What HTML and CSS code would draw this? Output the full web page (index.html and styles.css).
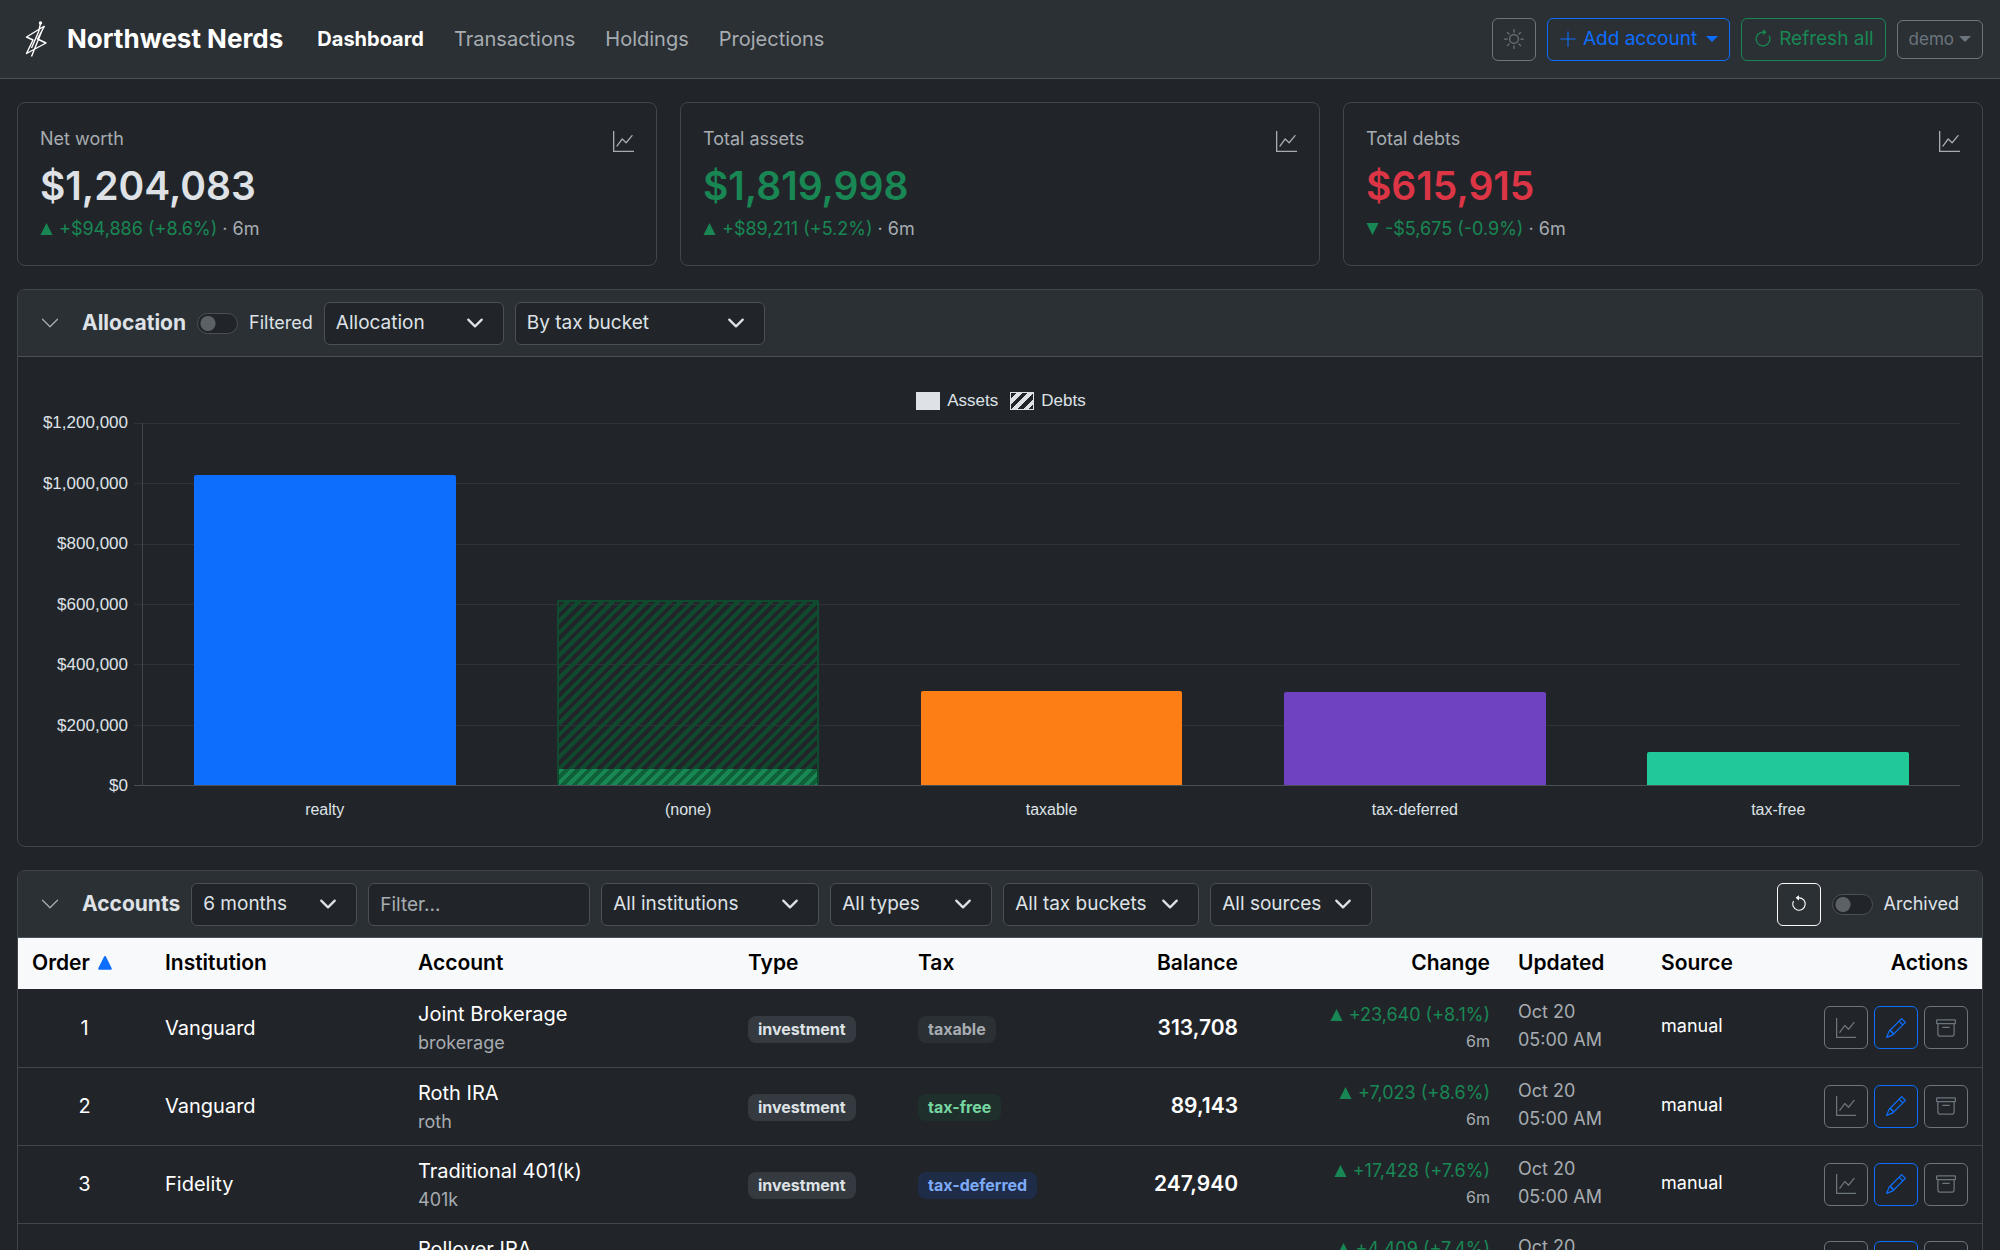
FILE: index.html
```html
<!DOCTYPE html>
<html lang="en">
<head>
<meta charset="utf-8">
<meta name="viewport" content="width=device-width, initial-scale=1">
<title>Northwest Nerds</title>
<link rel="stylesheet" href="styles.css">
</head>
<body>
<svg class="sprite" aria-hidden="true">
  <symbol id="graph-up" viewBox="0 0 16 16"><path fill-rule="evenodd" d="M0 0h1v15h15v1H0zm14.817 3.113a.5.5 0 0 1 .07.704l-4.5 5.5a.5.5 0 0 1-.74.037L7.06 6.767l-3.656 5.027a.5.5 0 0 1-.808-.588l4-5.5a.5.5 0 0 1 .758-.06l2.609 2.61 4.15-5.073a.5.5 0 0 1 .704-.07"/></symbol>
  <symbol id="sun" viewBox="0 0 16 16"><path d="M8 11a3 3 0 1 1 0-6 3 3 0 0 1 0 6m0 1a4 4 0 1 0 0-8 4 4 0 0 0 0 8M8 0a.5.5 0 0 1 .5.5v2a.5.5 0 0 1-1 0v-2A.5.5 0 0 1 8 0m0 13a.5.5 0 0 1 .5.5v2a.5.5 0 0 1-1 0v-2A.5.5 0 0 1 8 13m8-5a.5.5 0 0 1-.5.5h-2a.5.5 0 0 1 0-1h2a.5.5 0 0 1 .5.5M3 8a.5.5 0 0 1-.5.5h-2a.5.5 0 0 1 0-1h2A.5.5 0 0 1 3 8m10.657-5.657a.5.5 0 0 1 0 .707l-1.414 1.415a.5.5 0 1 1-.707-.708l1.414-1.414a.5.5 0 0 1 .707 0m-9.193 9.193a.5.5 0 0 1 0 .707L3.05 13.657a.5.5 0 0 1-.707-.707l1.414-1.414a.5.5 0 0 1 .707 0m9.193 2.121a.5.5 0 0 1-.707 0l-1.414-1.414a.5.5 0 0 1 .707-.707l1.414 1.414a.5.5 0 0 1 0 .707M4.464 4.465a.5.5 0 0 1-.707 0L2.343 3.05a.5.5 0 1 1 .707-.707l1.414 1.414a.5.5 0 0 1 0 .708"/></symbol>
  <symbol id="plus" viewBox="0 0 16 16"><path d="M8 1a.5.5 0 0 1 .5.5v6h6a.5.5 0 0 1 0 1h-6v6a.5.5 0 0 1-1 0v-6h-6a.5.5 0 0 1 0-1h6v-6A.5.5 0 0 1 8 1"/></symbol>
  <symbol id="clockwise" viewBox="0 0 16 16"><path fill-rule="evenodd" d="M8 3a5 5 0 1 0 4.546 2.914.5.5 0 0 1 .908-.417A6 6 0 1 1 8 2z"/><path d="M8 4.466V.534a.25.25 0 0 1 .41-.192l2.36 1.966c.12.1.12.284 0 .384L8.41 4.658A.25.25 0 0 1 8 4.466"/></symbol>
  <symbol id="counterclockwise" viewBox="0 0 16 16"><path fill-rule="evenodd" d="M8 3a5 5 0 1 1-4.546 2.914.5.5 0 0 0-.908-.417A6 6 0 1 0 8 2z"/><path d="M8 4.466V.534a.25.25 0 0 0-.41-.192L5.23 2.308a.25.25 0 0 0 0 .384l2.36 1.966A.25.25 0 0 0 8 4.466"/></symbol>
  <symbol id="pencil" viewBox="0 0 16 16"><path d="M12.146.146a.5.5 0 0 1 .708 0l3 3a.5.5 0 0 1 0 .708l-10 10a.5.5 0 0 1-.168.11l-5 2a.5.5 0 0 1-.65-.65l2-5a.5.5 0 0 1 .11-.168zM11.207 2.5 13.5 4.793 14.793 3.5 12.5 1.207zm1.586 3L10.5 3.207 4 9.707V10h.5a.5.5 0 0 1 .5.5v.5h.5a.5.5 0 0 1 .5.5v.5h.293zm-9.761 5.175-.106.106-1.528 3.821 3.821-1.528.106-.106A.5.5 0 0 1 5 12.5V12h-.5a.5.5 0 0 1-.5-.5V11h-.5a.5.5 0 0 1-.468-.325"/></symbol>
  <symbol id="archive" viewBox="0 0 16 16"><path d="M0 2a1 1 0 0 1 1-1h14a1 1 0 0 1 1 1v2a1 1 0 0 1-1 1v7.5a2.5 2.5 0 0 1-2.5 2.5h-9A2.5 2.5 0 0 1 1 12.5V5a1 1 0 0 1-1-1zm2 3v7.5A1.5 1.5 0 0 0 3.5 14h9a1.5 1.5 0 0 0 1.5-1.5V5zm13-3H1v2h14zM5 7.5a.5.5 0 0 1 .5-.5h5a.5.5 0 0 1 0 1h-5a.5.5 0 0 1-.5-.5"/></symbol>
  <symbol id="chevron" viewBox="0 0 16 16"><path fill-rule="evenodd" d="M1.646 4.646a.5.5 0 0 1 .708 0L8 10.293l5.646-5.647a.5.5 0 0 1 .708.708l-6 6a.5.5 0 0 1-.708 0l-6-6a.5.5 0 0 1 0-.708"/></symbol>
  <symbol id="up" viewBox="0 0 12 12"><path d="M6 0l6 12H0z"/></symbol>
  <symbol id="down" viewBox="0 0 12 12"><path d="M0 0h12L6 12z"/></symbol>
  <symbol id="sort-up" viewBox="0 0 14 14"><path d="M6.100.6a1 1 0 0 1 1.800 0l5.800 11.600a1 1 0 0 1-.9 1.500H1.200a1 1 0 0 1-.9-1.500z"/></symbol>
  <symbol id="caret" viewBox="0 0 12 6"><path d="M0 0h12L6 6z"/></symbol>
</svg>

<nav class="navbar">
  <a class="brand" href="#">
    <svg class="logo" viewBox="0 0 22 36" aria-hidden="true"><path d="M15.500 2.500L13.500 11M19.500 5L1.500 16 8 19 1.500 32.500 21 22 12.500 18 19.500 5M17 9.500L6.500 35.500M13.500 11L6.500 27" fill="none" stroke="currentColor" stroke-width="1.400" stroke-linejoin="round"/><circle cx="15.500" cy="2" r="1.700" fill="currentColor"/></svg>
    <span>Northwest Nerds</span>
  </a>
  <div class="nav-links">
    <a class="nav-link active" href="#">Dashboard</a>
    <a class="nav-link" href="#">Transactions</a>
    <a class="nav-link" href="#">Holdings</a>
    <a class="nav-link" href="#">Projections</a>
  </div>
  <div class="nav-actions">
    <button class="btn btn-icon" type="button" aria-label="Toggle theme"><svg class="icon"><use href="#sun"/></svg></button>
    <button class="btn btn-primary" type="button"><svg class="icon icon-sm"><use href="#plus"/></svg>Add account<svg class="caret"><use href="#caret"/></svg></button>
    <button class="btn btn-success" type="button"><svg class="icon"><use href="#clockwise"/></svg>Refresh all</button>
    <button class="btn btn-user" type="button">demo<svg class="caret"><use href="#caret"/></svg></button>
  </div>
</nav>

<main class="page">
  <section class="stats">
    <article class="card stat">
      <div>
        <div class="stat-label">Net worth</div>
        <div class="stat-value">$1,204,083</div>
        <div class="stat-note"><span class="gain"><svg class="tri"><use href="#up"/></svg>+$94,886 (+8.6%)</span> · 6m</div>
      </div>
      <svg class="stat-icon"><use href="#graph-up"/></svg>
    </article>
    <article class="card stat">
      <div>
        <div class="stat-label">Total assets</div>
        <div class="stat-value gain">$1,819,998</div>
        <div class="stat-note"><span class="gain"><svg class="tri"><use href="#up"/></svg>+$89,211 (+5.2%)</span> · 6m</div>
      </div>
      <svg class="stat-icon"><use href="#graph-up"/></svg>
    </article>
    <article class="card stat">
      <div>
        <div class="stat-label">Total debts</div>
        <div class="stat-value loss">$615,915</div>
        <div class="stat-note"><span class="gain"><svg class="tri"><use href="#down"/></svg>-$5,675 (-0.9%)</span> · 6m</div>
      </div>
      <svg class="stat-icon"><use href="#graph-up"/></svg>
    </article>
  </section>

  <section class="card">
    <header class="card-header">
      <button class="collapse" type="button" aria-label="Collapse allocation"><svg class="icon"><use href="#chevron"/></svg></button>
      <h2>Allocation</h2>
      <label class="switch"><input type="checkbox"><span>Filtered</span></label>
      <select class="select w-view" aria-label="View"><option>Allocation</option></select>
      <select class="select w-group" aria-label="Group by"><option>By tax bucket</option></select>
    </header>
    <div class="chart">
      <div class="legend">
        <span class="key"><i class="swatch"></i>Assets</span>
        <span class="key"><i class="swatch hatched"></i>Debts</span>
      </div>
      <div class="plot-row">
        <div class="y-axis">
          <span>$1,200,000</span><span>$1,000,000</span><span>$800,000</span><span>$600,000</span><span>$400,000</span><span>$200,000</span><span>$0</span>
        </div>
        <div class="grid">
          <i></i><i></i><i></i><i></i><i></i><i></i>
        </div>
        <div class="plot">
          <div class="bar blue" style="height: 85.7%"></div>
          <div class="bar debt" style="height: 51.1%"><div class="bar-asset" style="height: 8.5%"></div></div>
          <div class="bar orange" style="height: 26.1%"></div>
          <div class="bar purple" style="height: 25.8%"></div>
          <div class="bar teal" style="height: 9.2%"></div>
        </div>
      </div>
      <div class="x-axis">
        <span>realty</span><span>(none)</span><span>taxable</span><span>tax-deferred</span><span>tax-free</span>
      </div>
    </div>
  </section>

  <section class="card">
    <header class="card-header">
      <button class="collapse" type="button" aria-label="Collapse accounts"><svg class="icon"><use href="#chevron"/></svg></button>
      <h2>Accounts</h2>
      <select class="select w-period" aria-label="Period"><option>6 months</option></select>
      <input class="field" type="text" placeholder="Filter..." aria-label="Filter">
      <select class="select w-inst" aria-label="Institution"><option>All institutions</option></select>
      <select class="select w-type" aria-label="Type"><option>All types</option></select>
      <select class="select w-tax" aria-label="Tax bucket"><option>All tax buckets</option></select>
      <select class="select w-type" aria-label="Source"><option>All sources</option></select>
      <button class="btn btn-icon btn-light" type="button" aria-label="Reset"><svg class="icon icon-sm"><use href="#counterclockwise"/></svg></button>
      <label class="switch"><input type="checkbox"><span>Archived</span></label>
    </header>
    <table class="accounts">
      <colgroup>
        <col class="c-order"><col class="c-inst"><col><col class="c-type"><col class="c-tax"><col class="c-balance"><col class="c-change"><col class="c-updated"><col class="c-source"><col class="c-actions">
      </colgroup>
      <thead>
        <tr><th>Order<svg class="sort"><use href="#sort-up"/></svg></th><th>Institution</th><th>Account</th><th>Type</th><th>Tax</th><th class="right">Balance</th><th class="right">Change</th><th>Updated</th><th>Source</th><th class="right">Actions</th></tr>
      </thead>
      <tbody>
        <tr>
          <td class="center">1</td><td>Vanguard</td>
          <td><div>Joint Brokerage</div><div class="sub">brokerage</div></td>
          <td><span class="badge">investment</span></td><td><span class="badge taxable">taxable</span></td>
          <td class="right strong">313,708</td>
          <td class="right"><div class="delta gain"><svg class="tri"><use href="#up"/></svg>+23,640 (+8.1%)</div><div class="period">6m</div></td>
          <td class="when">Oct 20<br>05:00 AM</td><td class="source">manual</td>
          <td><div class="actions"><button class="btn btn-icon" type="button" aria-label="History"><svg class="icon"><use href="#graph-up"/></svg></button><button class="btn btn-icon btn-primary" type="button" aria-label="Edit"><svg class="icon"><use href="#pencil"/></svg></button><button class="btn btn-icon" type="button" aria-label="Archive"><svg class="icon"><use href="#archive"/></svg></button></div></td>
        </tr>
        <tr>
          <td class="center">2</td><td>Vanguard</td>
          <td><div>Roth IRA</div><div class="sub">roth</div></td>
          <td><span class="badge">investment</span></td><td><span class="badge free">tax-free</span></td>
          <td class="right strong">89,143</td>
          <td class="right"><div class="delta gain"><svg class="tri"><use href="#up"/></svg>+7,023 (+8.6%)</div><div class="period">6m</div></td>
          <td class="when">Oct 20<br>05:00 AM</td><td class="source">manual</td>
          <td><div class="actions"><button class="btn btn-icon" type="button" aria-label="History"><svg class="icon"><use href="#graph-up"/></svg></button><button class="btn btn-icon btn-primary" type="button" aria-label="Edit"><svg class="icon"><use href="#pencil"/></svg></button><button class="btn btn-icon" type="button" aria-label="Archive"><svg class="icon"><use href="#archive"/></svg></button></div></td>
        </tr>
        <tr>
          <td class="center">3</td><td>Fidelity</td>
          <td><div>Traditional 401(k)</div><div class="sub">401k</div></td>
          <td><span class="badge">investment</span></td><td><span class="badge deferred">tax-deferred</span></td>
          <td class="right strong">247,940</td>
          <td class="right"><div class="delta gain"><svg class="tri"><use href="#up"/></svg>+17,428 (+7.6%)</div><div class="period">6m</div></td>
          <td class="when">Oct 20<br>05:00 AM</td><td class="source">manual</td>
          <td><div class="actions"><button class="btn btn-icon" type="button" aria-label="History"><svg class="icon"><use href="#graph-up"/></svg></button><button class="btn btn-icon btn-primary" type="button" aria-label="Edit"><svg class="icon"><use href="#pencil"/></svg></button><button class="btn btn-icon" type="button" aria-label="Archive"><svg class="icon"><use href="#archive"/></svg></button></div></td>
        </tr>
        <tr>
          <td></td><td></td>
          <td><div>Rollover IRA</div><div class="sub">&nbsp;</div></td>
          <td></td><td></td>
          <td></td>
          <td class="right"><div class="delta gain"><svg class="tri"><use href="#up"/></svg>+4,409 (+7.4%)</div><div class="period">&nbsp;</div></td>
          <td class="when">Oct 20<br>&nbsp;</td><td></td>
          <td><div class="actions"><button class="btn btn-icon" type="button" aria-label="History"><svg class="icon"><use href="#graph-up"/></svg></button><button class="btn btn-icon btn-primary" type="button" aria-label="Edit"><svg class="icon"><use href="#pencil"/></svg></button><button class="btn btn-icon" type="button" aria-label="Archive"><svg class="icon"><use href="#archive"/></svg></button></div></td>
        </tr>
      </tbody>
    </table>
  </section>
</main>
</body>
</html>
```
FILE: styles.css
```css
:root {
  --bg: #212529;
  --panel: #2b3035;
  --line: #495057;
  --line-soft: #41464b;
  --text: #dee2e6;
  --muted: #a7acb1;
  --gray: #6c757d;
  --blue: #0d6efd;
  --green: #198754;
  --red: #dc3545;
}

* { box-sizing: border-box; }

body {
  margin: 0;
  height: 100vh;
  overflow: hidden;
  background: var(--bg);
  color: var(--text);
  font: 19px/30px Inter, "Liberation Sans", sans-serif;
}

svg { fill: currentColor; flex: none; }
.sprite { display: none; }
.icon { width: 20px; height: 20px; }
.icon-sm { width: 18px; height: 18px; }
.caret { width: 12px; height: 6px; }
.gain { color: var(--green); }
.loss { color: var(--red); }
.tri { width: 13px; height: 12px; margin-right: 6px; }

/* Navigation */
.navbar {
  display: flex;
  align-items: center;
  height: 79px;
  padding: 0 17px 0 25px;
  background: var(--panel);
  border-bottom: 1px solid var(--line);
}
.brand {
  display: flex;
  align-items: center;
  gap: 20px;
  color: #fff;
  font-size: 26px;
  font-weight: 700;
  text-decoration: none;
}
.logo { width: 22px; height: 36px; }
.nav-links { display: flex; gap: 30px; margin-left: 34px; }
.nav-link { color: var(--muted); font-size: 20px; line-height: 32px; text-decoration: none; }
.nav-link.active { color: #fff; font-weight: 700; }
.nav-actions { display: flex; align-items: center; gap: 11px; margin-left: auto; }

.btn {
  display: flex;
  align-items: center;
  justify-content: center;
  gap: 6px;
  height: 43px;
  padding: 0 11px;
  background: transparent;
  border: 1px solid var(--gray);
  border-radius: 6px;
  color: var(--gray);
  font: inherit;
  white-space: nowrap;
}
.btn .caret { margin-left: 3px; }
.btn-icon { width: 44px; padding: 0; }
.btn-primary { border-color: var(--blue); color: var(--blue); }
.btn-success { border-color: var(--green); color: var(--green); }
.btn-light { border-color: #f8f9fa; color: #f8f9fa; margin-left: auto; }
.btn-user { gap: 2px; height: 39px; font-size: 17px; }

/* Cards */
.page { display: flex; flex-direction: column; gap: 23px; padding: 23px 17px; }
.stats { display: grid; grid-template-columns: repeat(3, 1fr); gap: 23px; }
.card {
  border: 1px solid var(--line-soft);
  border-radius: 8px;
  overflow: hidden;
}
.stat {
  display: flex;
  justify-content: space-between;
  align-items: flex-start;
  height: 164px;
  padding: 22px 22px;
}
.stat-label { color: var(--muted); font-size: 18px; line-height: 27px; }
.stat-value { font-size: 39px; font-weight: 600; line-height: 48px; margin: 10px 0 5px; }
.stat-note { color: var(--muted); font-size: 18px; line-height: 27px; }
.stat-icon { width: 21px; height: 21px; margin-top: 6px; color: var(--muted); }

.card-header {
  display: flex;
  align-items: center;
  gap: 11px;
  height: 67px;
  padding: 0 23px 0 22px;
  background: var(--panel);
  border-bottom: 1px solid var(--line);
}
.card-header h2 { margin: 0; font-size: 21px; font-weight: 700; }
.collapse {
  display: flex;
  margin: 0 11px 0 0;
  padding: 0;
  border: 0;
  background: none;
  color: var(--muted);
}
.switch { display: flex; align-items: center; gap: 11px; font-size: 18px; }
.switch input {
  appearance: none;
  flex: none;
  width: 41px;
  height: 21px;
  margin: 0;
  border: 1px solid var(--line);
  border-radius: 11px;
  background: radial-gradient(circle at 10px 50%, #5c6166 7px, transparent 8px) var(--bg);
}
.select, .field {
  height: 43px;
  margin: 0;
  padding: 0 11px;
  border: 1px solid var(--line);
  border-radius: 6px;
  background-color: var(--bg);
  color: var(--text);
  font: inherit;
}
.select {
  appearance: none;
  background-image: url("data:image/svg+xml,%3Csvg xmlns='http://www.w3.org/2000/svg' viewBox='0 0 16 16'%3E%3Cpath fill='none' stroke='%23dee2e6' stroke-linecap='round' stroke-linejoin='round' stroke-width='2' d='m2 5 6 6 6-6'/%3E%3C/svg%3E");
  background-repeat: no-repeat;
  background-position: right 18px center;
  background-size: 20px 18px;
}
.field { width: 222px; }
.field::placeholder { color: var(--muted); opacity: 1; }
.w-view { width: 180px; }
.w-group { width: 250px; }
.w-period { width: 166px; }
.w-inst { width: 218px; }
.w-type { width: 162px; }
.w-tax { width: 196px; }

/* Chart */
.chart {
  padding: 34px 22px 26px 24px;
  font: 17px/20px "Liberation Sans", Arial, sans-serif;
}
.legend { display: flex; justify-content: center; gap: 12px; }
.key { display: flex; align-items: center; gap: 7px; }
.swatch { width: 24px; height: 18px; background: var(--text); }
.swatch.hatched {
  border: 1px solid var(--text);
  background: repeating-linear-gradient(135deg, var(--bg) 0 4px, var(--text) 4px 8px);
}
.plot-row {
  display: grid;
  grid-template-columns: 86px 14px 1fr;
  height: 363px;
  margin-top: 12px;
}
.y-axis {
  display: flex;
  flex-direction: column;
  justify-content: space-between;
  margin: -10px 0;
  text-align: right;
}
.grid {
  grid-column: 2 / 4;
  grid-row: 1;
  display: grid;
  grid-template-rows: repeat(6, 1fr);
  margin-left: 6px;
  border-bottom: 1px solid var(--line);
}
.grid i { border-top: 1px solid #2f3337; }
.plot {
  grid-column: 3;
  grid-row: 1;
  display: grid;
  grid-template-columns: repeat(5, 1fr);
  align-items: end;
  border-left: 1px solid var(--line-soft);
  padding-bottom: 1px;
}
.bar { width: 72%; justify-self: center; border-radius: 2px 2px 0 0; }
.blue { background: var(--blue); }
.orange { background: #fd7e14; }
.purple { background: #6f42c1; }
.teal { background: #20c997; }
.debt {
  display: flex;
  align-items: flex-end;
  border: 2px solid #0f4a2f;
  border-bottom: 0;
  background: repeating-linear-gradient(135deg, transparent 0 4px, #0f4a2f 4px 8px);
}
.bar-asset {
  width: 100%;
  background: repeating-linear-gradient(135deg, #198754 0 4px, #0f5f39 4px 8px);
}
.x-axis {
  display: grid;
  grid-template-columns: repeat(5, 1fr);
  margin: 14px 0 0 101px;
  font-size: 16px;
  text-align: center;
}

/* Accounts */
.accounts {
  width: 100%;
  border-collapse: collapse;
  table-layout: fixed;
  color: #fff;
  font-size: 20px;
}
.accounts th {
  height: 51px;
  padding: 0 14px 2px;
  background: #f8f9fa;
  color: #000;
  font-size: 21px;
  font-weight: 600;
  text-align: left;
}
.accounts td {
  height: 78px;
  padding: 0 14px;
  border-bottom: 1px solid var(--line-soft);
}
.accounts .center { text-align: center; }
.accounts .right { text-align: right; }
.accounts .strong { font-size: 21px; font-weight: 600; }
.sort { width: 14px; height: 14px; margin-left: 8px; color: var(--blue); }
.sub { color: var(--muted); font-size: 18px; line-height: 27px; }
.badge {
  display: inline-block;
  padding: 0 10px;
  border-radius: 8px;
  background: #343a40;
  color: var(--text);
  font-size: 16px;
  font-weight: 700;
  line-height: 27px;
}
.taxable { background: var(--panel); color: var(--muted); }
.free { background: #1f2f2c; color: #75d6a0; }
.deferred { background: #1f2c47; color: #7dabf7; }
.delta { font-size: 18px; line-height: 27px; }
.period { color: var(--muted); font-size: 16px; line-height: 27px; }
.accounts .when { padding-bottom: 3px; color: var(--muted); font-size: 18px; line-height: 28px; }
.accounts .source { padding-bottom: 3px; font-size: 18px; }
.actions { display: flex; justify-content: flex-end; gap: 6px; }
.c-order { width: 133px; }
.c-inst { width: 253px; }
.c-type { width: 170px; }
.c-tax { width: 176px; }
.c-balance { width: 172px; }
.c-change { width: 252px; }
.c-updated { width: 143px; }
.c-source { width: 140px; }
.c-actions { width: 195px; }
```
